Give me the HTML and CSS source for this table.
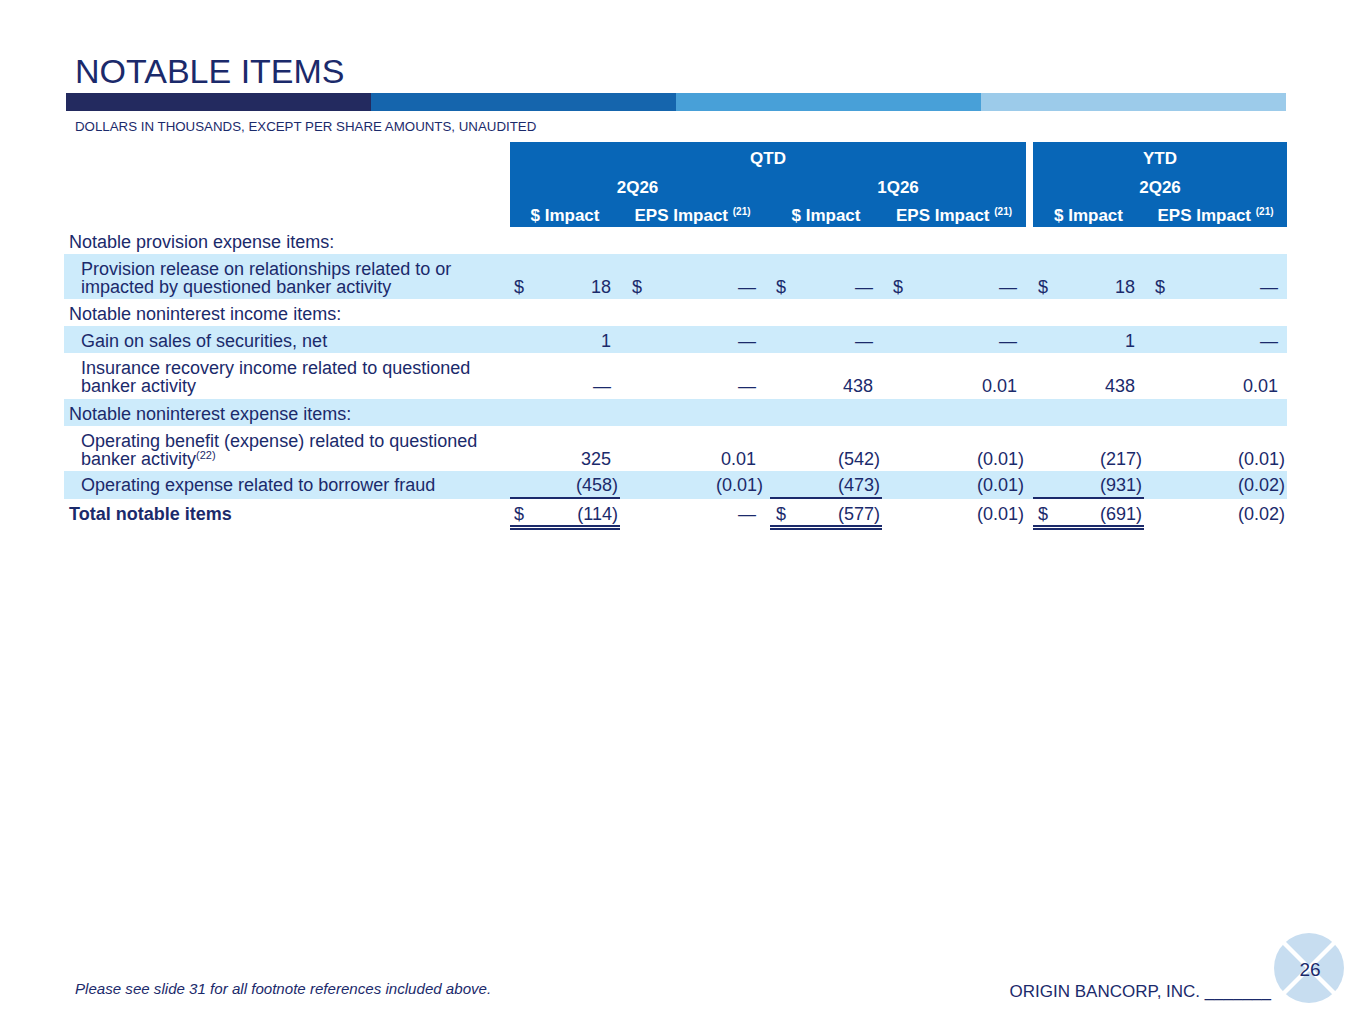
FILE: index.html
```html
<!DOCTYPE html>
<html lang="en">
<head>
<meta charset="utf-8">
<title>Notable Items</title>
<link rel="stylesheet" href="styles.css">
</head>
<body>
<div class="slide">
  <h1 class="title">NOTABLE ITEMS</h1>
  <div class="bar"><span class="b1"></span><span class="b2"></span><span class="b3"></span><span class="b4"></span></div>
  <p class="subtitle">DOLLARS IN THOUSANDS, EXCEPT PER SHARE AMOUNTS, UNAUDITED</p>

  <div class="table">
    <div class="grid head hr1">
      <div class="blank"></div>
      <div class="hc qtd">QTD</div>
      <div class="gap"></div>
      <div class="hc ytd">YTD</div>
    </div>
    <div class="grid head hr2">
      <div class="blank"></div>
      <div class="hc q1">2Q26</div>
      <div class="hc"></div>
      <div class="hc q2">1Q26</div>
      <div class="gap"></div>
      <div class="hc ytd">2Q26</div>
    </div>
    <div class="grid head hr3">
      <div class="blank"></div>
      <div class="hc">$ Impact</div>
      <div class="hc">EPS Impact <sup>(21)</sup></div>
      <div class="hc"></div>
      <div class="hc">$ Impact</div>
      <div class="hc">EPS Impact <sup>(21)</sup></div>
      <div class="gap"></div>
      <div class="hc">$ Impact</div>
      <div class="hc">EPS Impact <sup>(21)</sup></div>
    </div>

    <div class="grid row">
      <div class="lbl">Notable provision expense items:</div>
    </div>
    <div class="grid row alt">
      <div class="lbl sub">Provision release on relationships related to or<br>impacted by questioned banker activity</div>
      <div class="n k1"><span>$</span><span class="p">18</span></div>
      <div class="n k2"><span>$</span><span class="p">—</span></div>
      <div></div>
      <div class="n k3"><span>$</span><span class="p">—</span></div>
      <div class="n k4"><span>$</span><span class="p">—</span></div>
      <div></div>
      <div class="n k5"><span>$</span><span class="p">18</span></div>
      <div class="n k6"><span>$</span><span class="p">—</span></div>
    </div>
    <div class="grid row">
      <div class="lbl">Notable noninterest income items:</div>
    </div>
    <div class="grid row alt">
      <div class="lbl sub">Gain on sales of securities, net</div>
      <div class="n k1"><span></span><span class="p">1</span></div>
      <div class="n k2"><span></span><span class="p">—</span></div>
      <div></div>
      <div class="n k3"><span></span><span class="p">—</span></div>
      <div class="n k4"><span></span><span class="p">—</span></div>
      <div></div>
      <div class="n k5"><span></span><span class="p">1</span></div>
      <div class="n k6"><span></span><span class="p">—</span></div>
    </div>
    <div class="grid row tall">
      <div class="lbl sub">Insurance recovery income related to questioned<br>banker activity</div>
      <div class="n k1"><span></span><span class="p">—</span></div>
      <div class="n k2"><span></span><span class="p">—</span></div>
      <div></div>
      <div class="n k3"><span></span><span class="p">438</span></div>
      <div class="n k4"><span></span><span class="p">0.01</span></div>
      <div></div>
      <div class="n k5"><span></span><span class="p">438</span></div>
      <div class="n k6"><span></span><span class="p">0.01</span></div>
    </div>
    <div class="grid row alt">
      <div class="lbl">Notable noninterest expense items:</div>
    </div>
    <div class="grid row">
      <div class="lbl sub">Operating benefit (expense) related to questioned<br>banker activity<sup>(22)</sup></div>
      <div class="n k1"><span></span><span class="p">325</span></div>
      <div class="n k2"><span></span><span class="p">0.01</span></div>
      <div></div>
      <div class="n k3"><span></span><span>(542)</span></div>
      <div class="n k4"><span></span><span>(0.01)</span></div>
      <div></div>
      <div class="n k5"><span></span><span>(217)</span></div>
      <div class="n k6"><span></span><span>(0.01)</span></div>
    </div>
    <div class="grid row alt last">
      <div class="lbl sub">Operating expense related to borrower fraud</div>
      <div class="n k1 u"><span></span><span>(458)</span></div>
      <div class="n k2"><span></span><span>(0.01)</span></div>
      <div></div>
      <div class="n k3 u"><span></span><span>(473)</span></div>
      <div class="n k4"><span></span><span>(0.01)</span></div>
      <div></div>
      <div class="n k5 u"><span></span><span>(931)</span></div>
      <div class="n k6"><span></span><span>(0.02)</span></div>
    </div>
    <div class="grid row total">
      <div class="lbl">Total notable items</div>
      <div class="n k1 uu"><span>$</span><span>(114)</span></div>
      <div class="n k2"><span></span><span class="p">—</span></div>
      <div></div>
      <div class="n k3 uu"><span>$</span><span>(577)</span></div>
      <div class="n k4"><span></span><span>(0.01)</span></div>
      <div></div>
      <div class="n k5 uu"><span>$</span><span>(691)</span></div>
      <div class="n k6"><span></span><span>(0.02)</span></div>
    </div>
  </div>

  <div class="footer">
    <p class="note">Please see slide 31 for all footnote references included above.</p>
    <p class="brand">ORIGIN BANCORP, INC. _______</p>
  </div>

  <div class="logo">
    <svg width="70" height="70" viewBox="0 0 70 70" aria-hidden="true">
      <circle cx="35" cy="35" r="35" fill="#c7ddf0"/>
      <line x1="8" y1="8" x2="62" y2="62" stroke="#ffffff" stroke-width="4.5"/>
      <line x1="62" y1="8" x2="8" y2="62" stroke="#ffffff" stroke-width="4.5"/>
    </svg>
    <span class="num">26</span>
  </div>
</div>
</body>
</html>
```

FILE: styles.css
```css
body {
  margin: 0;
  background: #ffffff;
  font-family: "Liberation Sans", Arial, sans-serif;
  color: #1b2a6b;
}

.slide {
  position: relative;
  width: 1365px;
  height: 1024px;
  box-sizing: border-box;
  display: flex;
  flex-direction: column;
  padding-bottom: 23px;
}

.title {
  margin: 51px 0 0 75px;
  font-size: 34px;
  line-height: 40px;
  font-weight: normal;
  color: #1b2a6b;
}

.bar {
  display: flex;
  margin: 2px 0 0 66px;
  width: 1220px;
  height: 18px;
}
.bar span { flex: 1; }
.b1 { background: #232a5f; }
.b2 { background: #1565ad; }
.b3 { background: #48a0d8; }
.b4 { background: #9ccbea; }

.subtitle {
  margin: 8px 0 0 75px;
  font-size: 13.3px;
  line-height: 16px;
}

.table {
  margin: 7px 0 0 64px;
  width: 1223px;
  font-size: 18px;
}

.grid {
  display: grid;
  grid-template-columns: 446px 110px 145px 5px 112px 144px 7px 111px 143px;
}

.hc {
  box-sizing: border-box;
  background: #0866b7;
  color: #ffffff;
  font-weight: bold;
  font-size: 17px;
  line-height: 20px;
  text-align: center;
  white-space: nowrap;
}
.hc sup {
  font-size: 10px;
  vertical-align: 6px;
  line-height: 0;
}
.hr1 .hc { height: 30px; padding-top: 7px; }
.hr2 .hc { height: 28px; padding-top: 6px; }
.hr3 .hc { height: 27px; padding-top: 6px; }
.qtd { grid-column: 2 / 7; }
.ytd { grid-column: 8 / 10; }
.q1 { grid-column: 2 / 4; }
.q2 { grid-column: 5 / 7; }

.row { line-height: 18px; }
.row > div {
  padding-top: 6px;
  padding-bottom: 3px;
}
.row.tall > div { padding-bottom: 4px; }
.row.last > div {
  padding-top: 5px;
  padding-bottom: 5px;
}
.alt { background: #cdebfb; }

.lbl { padding-left: 5px; }
.lbl.sub { padding-left: 17px; }
.lbl sup {
  font-size: 11px;
  vertical-align: 6px;
  line-height: 0;
}

.n {
  display: flex;
  justify-content: space-between;
  align-items: flex-end;
  padding-right: 2px;
}
.n .p { padding-right: 7px; }
.k1 { padding-left: 4px; }
.k2 { padding-left: 12px; }
.k3 { padding-left: 6px; }
.k4 { padding-left: 11px; }
.k5 { padding-left: 5px; }
.k6 { padding-left: 11px; }

.u { box-shadow: inset 0 -2px 0 #1b2a6b; }
.uu { box-shadow: inset 0 -2px 0 #1b2a6b, inset 0 -3px 0 #ffffff, inset 0 -5px 0 #1b2a6b; }

.row.total > div {
  padding-top: 6px;
  padding-bottom: 7px;
}
.total .lbl { font-weight: bold; }

.footer {
  margin-top: auto;
  display: flex;
  justify-content: space-between;
  align-items: flex-end;
  padding: 0 94px 0 75px;
}
.note {
  margin: 0 0 3px 0;
  font-style: italic;
  font-size: 15.1px;
  line-height: 18px;
}
.brand {
  margin: 0;
  font-size: 17px;
  line-height: 19px;
  white-space: pre;
}

.logo {
  position: absolute;
  left: 1274px;
  top: 933px;
  width: 70px;
  height: 70px;
}
.logo svg { display: block; }
.logo .num {
  position: absolute;
  left: 0;
  right: 0;
  top: 27px;
  text-align: center;
  font-size: 19px;
  line-height: 20px;
  color: #1b2a6b;
  padding-left: 2px;
}
```
